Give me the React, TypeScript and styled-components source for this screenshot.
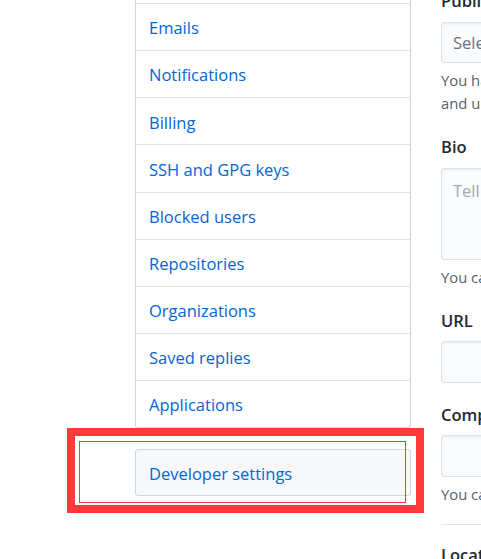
import React from "react";
import styled, { createGlobalStyle } from "styled-components";

const GlobalStyle = createGlobalStyle`
  html, body { margin: 0; padding: 0; background: #ffffff; overflow: hidden; }
  body { font-family: "Open Sans", "Noto Sans", Arial, sans-serif; }
  * { box-sizing: border-box; }
`;

const Page = styled.div`
  position: relative;
  width: 481px;
  height: 559px;
  overflow: hidden;
  display: flex;
  align-items: flex-start;
  gap: 30px;
  padding-left: 135px;
`;

const SideColumn = styled.div`
  flex: 0 0 276px;
  margin-top: -43.15px;
  display: flex;
  flex-direction: column;
  gap: 20.6px;
`;

const Menu = styled.nav`
  display: flex;
  flex-direction: column;
  border: 1px solid #d1d5da;
  border-top: none;
  border-radius: 0 0 3px 3px;
`;

const MenuItem = styled.a`
  display: flex;
  align-items: center;
  height: 47.15px;
  padding: 1.5px 0 0 13px;
  border-bottom: 1px solid #e1e4e8;
  color: #0366d6;
  font-size: 16.5px;
  text-decoration: none;
  white-space: nowrap;
  &:last-child {
    border-bottom: none;
    height: 46.15px;
  }
`;

const DevBox = styled.a`
  display: flex;
  align-items: center;
  height: 47px;
  padding: 1.5px 0 0 13px;
  border: 1px solid #d1d5da;
  border-radius: 3px;
  background: #f6f8fa;
  color: #0366d6;
  font-size: 16.5px;
  text-decoration: none;
`;

const Main = styled.div`
  flex: 0 0 440px;
  margin-top: -10px;
  display: flex;
  flex-direction: column;
`;

const Group = styled.div`
  display: flex;
  flex-direction: column;
  margin-bottom: 21px;
`;

const Label = styled.label`
  display: block;
  font-size: 16.5px;
  line-height: 21px;
  font-weight: 600;
  color: #24292e;
  margin-bottom: 10.5px;
  white-space: nowrap;
`;

const Field = styled.div<{ $tall?: boolean }>`
  display: flex;
  align-items: ${(p) => (p.$tall ? "flex-start" : "center")};
  height: ${(p) => (p.$tall ? "92px" : "41.5px")};
  padding: ${(p) => (p.$tall ? "10px 11px" : "0 11px")};
  border: 1px solid #dfe2e5;
  border-radius: 3px;
  background: #fafbfc;
  box-shadow: inset 0 1px 2px rgba(27, 31, 35, 0.075);
  font-size: 16.5px;
  white-space: nowrap;
`;

const Placeholder = styled.span<{ $light?: boolean }>`
  color: ${(p) => (p.$light ? "#a3aab1" : "#6a737d")};
`;

const Note = styled.p`
  margin: 6px 0 0;
  font-size: 14.8px;
  line-height: 23px;
  color: #586069;
  white-space: nowrap;
`;

const Rule = styled.hr`
  border: none;
  border-top: 1px solid #e1e4e8;
  margin: -3px 0 19px;
`;

const AnnotationThick = styled.div`
  position: absolute;
  left: 67px;
  top: 428px;
  width: 357px;
  height: 85px;
  border: 8px solid #fd3a3a;
  pointer-events: none;
`;

const AnnotationThin = styled.div`
  position: absolute;
  left: 79px;
  top: 441px;
  width: 327px;
  height: 62px;
  border: 1px solid #fd3a3a;
  pointer-events: none;
`;

const menuItems = [
  "Account security",
  "Emails",
  "Notifications",
  "Billing",
  "SSH and GPG keys",
  "Blocked users",
  "Repositories",
  "Organizations",
  "Saved replies",
  "Applications",
];

export default function App() {
  return (
    <>
      <GlobalStyle />
      <Page>
        <SideColumn>
          <Menu>
            {menuItems.map((m) => (
              <MenuItem key={m} href="#">
                {m}
              </MenuItem>
            ))}
          </Menu>
          <DevBox href="#">Developer settings</DevBox>
        </SideColumn>
        <Main>
          <Group>
            <Label>Public email</Label>
            <Field>
              <Placeholder>Select a verified email to display</Placeholder>
            </Field>
            <Note>
              You have set your email address to private. To toggle email privacy, go to email settings
              <br />
              and uncheck “Keep my email address private.”
            </Note>
          </Group>
          <Group>
            <Label>Bio</Label>
            <Field $tall>
              <Placeholder $light>Tell us a little bit about yourself</Placeholder>
            </Field>
            <Note>You can @mention other users and organizations to link to them.</Note>
          </Group>
          <Group>
            <Label>URL</Label>
            <Field />
          </Group>
          <Group>
            <Label>Company</Label>
            <Field />
            <Note>You can @mention your company’s GitHub organization to link it.</Note>
          </Group>
          <Rule />
          <Group>
            <Label>Location</Label>
            <Field />
          </Group>
        </Main>
        <AnnotationThick />
        <AnnotationThin />
      </Page>
    </>
  );
}
